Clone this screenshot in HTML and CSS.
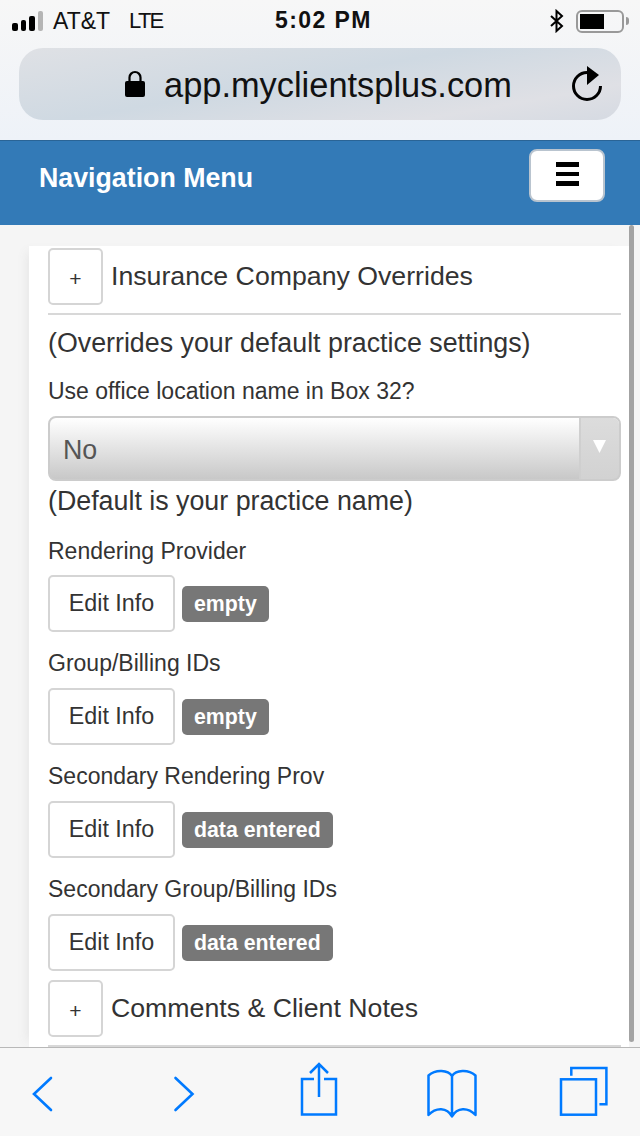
FILE: index.html
```html
<!DOCTYPE html>
<html lang="en">
<head>
<meta charset="utf-8">
<title>Navigation Menu</title>
<link rel="stylesheet" href="styles.css">
</head>
<body>
<div class="phone">
  <header class="chrome">
    <div class="status">
      <div class="status-left">
        <span class="signal"><i class="d1"></i><i class="d2"></i><i class="d3"></i><i class="d4"></i></span>
        <span class="carrier">AT&amp;T</span>
        <span class="net">LTE</span>
      </div>
      <div class="clock">5:02 PM</div>
      <div class="status-right">
        <svg class="bt" width="16" height="24" viewBox="0 0 16 24"><path d="M2 7l11 10-5.500 5V2L13 7 2 17" fill="none" stroke="#000" stroke-width="2"/></svg>
        <span class="battery"><span class="battery-fill"></span></span>
        <span class="battery-tip"></span>
      </div>
    </div>
    <div class="urlbar">
      <svg class="lock" width="22" height="28" viewBox="0 0 22 28"><path d="M5.500 13V7.500a5.500 5.500 0 0 1 11 0V13" fill="none" stroke="#000" stroke-width="2.200"/><rect x="1" y="11" width="20" height="16" rx="2" fill="#000"/></svg>
      <span class="url">app.myclientsplus.com</span>
      <svg class="reload" width="32" height="38" viewBox="0 0 32 38"><path d="M16 7.500A13.500 13.500 0 1 0 29.500 21" fill="none" stroke="#000" stroke-width="3"/><path d="M16 1l12 9-12 10z" fill="#000"/></svg>
    </div>
  </header>
  <nav class="navbar">
    <span class="brand">Navigation Menu</span>
    <button class="toggle" type="button"><span></span><span></span><span></span></button>
  </nav>
  <main class="content">
    <div class="panel">
      <div class="section-row">
        <button class="plus" type="button">+</button>
        <span class="section-title">Insurance Company Overrides</span>
      </div>
      <div class="rule"></div>
      <p class="lead">(Overrides your default practice settings)</p>
      <p class="label first">Use office location name in Box 32?</p>
      <div class="select">
        <span class="select-value">No</span>
        <span class="select-arrow"><svg width="13" height="13" viewBox="0 0 13 13"><path d="M0 0h13L6.500 13z" fill="#fff"/></svg></span>
      </div>
      <p class="lead after">(Default is your practice name)</p>
      <p class="label l1">Rendering Provider</p>
      <div class="edit-row"><button class="edit" type="button">Edit Info</button><span class="badge">empty</span></div>
      <p class="label">Group/Billing IDs</p>
      <div class="edit-row"><button class="edit" type="button">Edit Info</button><span class="badge">empty</span></div>
      <p class="label">Secondary Rendering Prov</p>
      <div class="edit-row"><button class="edit" type="button">Edit Info</button><span class="badge">data entered</span></div>
      <p class="label">Secondary Group/Billing IDs</p>
      <div class="edit-row"><button class="edit" type="button">Edit Info</button><span class="badge">data entered</span></div>
      <div class="section-row second">
        <button class="plus" type="button">+</button>
        <span class="section-title">Comments &amp; Client Notes</span>
      </div>
      <div class="rule"></div>
    </div>
    <div class="scrollbar"></div>
  </main>
  <footer class="toolbar">
    <svg width="24" height="38" viewBox="0 0 24 38"><path d="M20 2L3 18l17 16" fill="none" stroke="#007aff" stroke-width="2.600" stroke-linecap="round"/></svg>
    <svg width="24" height="38" viewBox="0 0 24 38"><path d="M4.500 2l17 16-17 16" fill="none" stroke="#007aff" stroke-width="2.600" stroke-linecap="round"/></svg>
    <svg width="40" height="54" viewBox="0 0 40 54"><path d="M15 17H3v35.500h34V17H25M20 35V3M11 11l9-9 9 9" fill="none" stroke="#007aff" stroke-width="2.500"/></svg>
    <svg width="54" height="50" viewBox="0 0 54 50"><path d="M27 7C23 1 11 0 3.500 6.500V46C11 38 22 38 27 47.500 32 38 43 38 50.500 46V6.500C43 0 31 1 27 7zM27 7v40" fill="none" stroke="#007aff" stroke-width="2.500" stroke-linejoin="round"/></svg>
    <svg width="52" height="50" viewBox="0 0 52 50"><path d="M14.300 9.700V2h35.100v36.300h-7" fill="none" stroke="#007aff" stroke-width="2.500"/><rect x="4" y="13.300" width="35" height="35.400" fill="none" stroke="#007aff" stroke-width="2.500"/></svg>
  </footer>
</div>
</body>
</html>
```
FILE: styles.css
```css
* { box-sizing: border-box; }
html, body { margin: 0; padding: 0; }
body { width: 640px; height: 1136px; overflow: hidden; font-family: "Liberation Sans", Arial, sans-serif; color: #333; }
.phone { width: 640px; height: 1136px; display: flex; flex-direction: column; background: #f5f5f5; }

.chrome { height: 140px; flex: none; padding: 0 19px; background: linear-gradient(#f7f7f7, #eef2f8); }
.status { height: 48px; margin: 0 -19px; padding: 0 11px 6px 12px; display: flex; align-items: center; position: relative; color: #111; font-size: 23px; }
.status-left { display: flex; align-items: center; }
.signal { display: flex; align-items: flex-end; gap: 3px; height: 20px; margin-right: 10px; }
.signal i { display: block; width: 5.500px; border-radius: 2px; background: #000; }
.signal .d1 { height: 8px; }
.signal .d2 { height: 11px; }
.signal .d3 { height: 15px; }
.signal .d4 { height: 20px; background: #b5b5b5; }
.net { margin-left: 19px; font-size: 22px; letter-spacing: -1.800px; }
.clock { position: absolute; left: 275px; top: 7px; font-weight: 700; font-size: 23px; letter-spacing: 1.400px; }
.status-right { margin-left: auto; display: flex; align-items: center; }
.bt { margin-right: 11px; }
.battery { display: block; width: 48px; height: 23px; border: 2px solid #999; border-radius: 6px; padding: 2px; }
.battery-fill { display: block; width: 24px; height: 15px; background: #000; }
.battery-tip { display: block; width: 3px; height: 8px; margin-left: 2px; background: #999; border-radius: 0 3px 3px 0; }

.urlbar { height: 72px; border-radius: 24px; background: linear-gradient(170deg, #dfe1e5, #cfd9e2 45%, #dfe0e5 80%, #d5dae2); display: flex; align-items: center; padding-left: 105px; position: relative; }
.lock { margin-right: 18px; }
.url { font-size: 34.400px; color: #111; position: relative; top: 1px; }
.reload { position: absolute; right: 18px; top: 17px; }

.navbar { height: 85px; flex: none; background: #337ab7; border-top: 1px solid #2a6496; display: flex; align-items: flex-start; justify-content: space-between; padding: 8px 35px 0 39px; }
.brand { color: #fff; font-weight: 700; font-size: 26.750px; line-height: 58px; }
.toggle { width: 76px; height: 53px; padding: 0 0 3px; background: #fff; border: 2px solid #b9c4cf; border-radius: 8px; display: flex; flex-direction: column; align-items: center; justify-content: center; gap: 5px; }
.toggle span { display: block; width: 23px; height: 4.500px; background: #000; }

.content { flex: 1; min-height: 0; position: relative; padding: 21px 11px 0 29px; background: #f5f5f5; overflow: hidden; }
.panel { height: 100%; background: #fff; padding: 2px 8px 0 19px; box-shadow: -8px 0 10px -6px #e6e6e6; }
.scrollbar { position: absolute; top: 0; right: 6px; width: 5px; height: 817px; background: #a3a3a3; border-radius: 3px; }

.section-row { display: flex; align-items: center; gap: 8px; }
.second { margin-top: 9px; }
.plus { width: 55px; height: 57px; padding: 4px 0 0; background: #fff; border: 2px solid #d5d5d5; border-radius: 5px; font: 21px "Liberation Sans", Arial, sans-serif; color: #333; }
.section-title { font-size: 26.700px; }
.rule { height: 2px; margin-top: 8px; background: #d8d8d8; }
p { margin: 0; }
.lead { font-size: 26.800px; line-height: 30px; margin-top: 13px; }
.lead.after { margin-top: 5px; }
.label { font-size: 23px; line-height: 26px; margin-top: 18px; }
.label.first { margin-top: 20px; }
.label.l1 { margin-top: 22px; margin-bottom: -1px; }
.select { height: 65px; margin-top: 12px; border: 2px solid #ccc; border-radius: 8px; background: linear-gradient(#fff, #c8c8c8); display: flex; align-items: center; justify-content: space-between; }
.select-value { font-size: 26.800px; color: #555; padding-left: 13px; position: relative; top: 2px; }
.select-arrow { width: 40px; height: 100%; background: linear-gradient(#dcdcdc, #d2d2d2); border-left: 2px solid #cfcfcf; border-radius: 0 6px 6px 0; display: flex; justify-content: center; padding: 22px 2px 0 0; }
.edit-row { display: flex; align-items: center; gap: 7px; margin-top: 12px; height: 57px; }
.edit { width: 127px; height: 57px; padding: 0; background: #fff; border: 2px solid #d5d5d5; border-radius: 5px; font: 23.300px "Liberation Sans", Arial, sans-serif; color: #333; }
.badge { display: block; height: 36px; line-height: 36px; padding: 0 12px; background: #777; color: #fff; border-radius: 5px; font-weight: 700; font-size: 21.300px; }

.toolbar { height: 89px; flex: none; border-top: 1px solid #b8b8b8; background: #f7f7f7; display: flex; align-items: flex-start; padding: 28px 0 0 31px; position: relative; }
.toolbar svg:nth-child(2) { margin-left: 116px; }
.toolbar svg:nth-child(3) { margin-left: 104px; margin-top: -14px; }
.toolbar svg:nth-child(4) { margin-left: 86px; margin-top: -7px; }
.toolbar svg:nth-child(5) { margin-left: 78px; margin-top: -10px; }
```
